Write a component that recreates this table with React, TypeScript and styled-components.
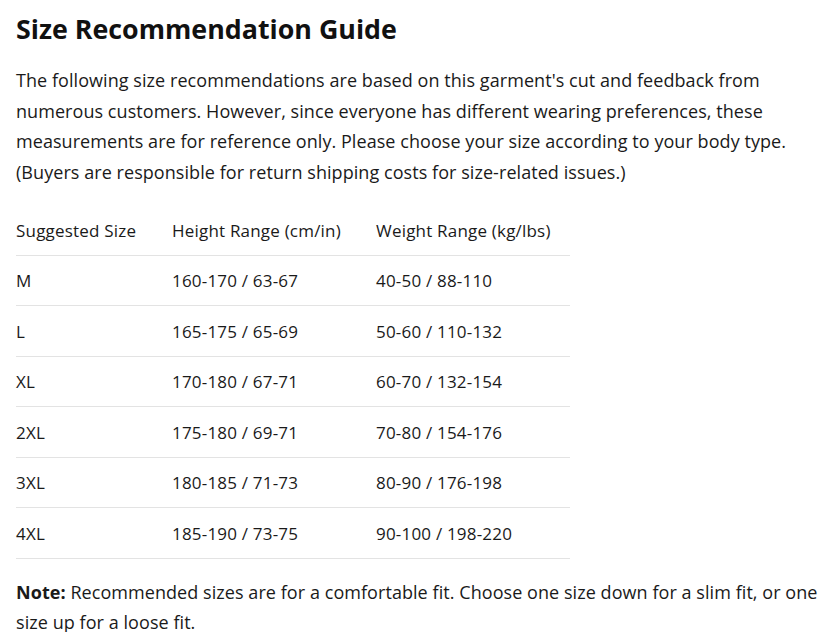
import React from 'react';
import styled, { createGlobalStyle } from 'styled-components';

const GlobalStyle = createGlobalStyle`
  html, body {
    margin: 0;
    padding: 0;
    background: #ffffff;
  }
  body {
    font-family: 'Open Sans', 'Noto Sans', 'Liberation Sans', sans-serif;
    color: #1a1a1a;
  }
`;

const rows = [
  { size: 'M', height: '160-170 / 63-67', weight: '40-50 / 88-110' },
  { size: 'L', height: '165-175 / 65-69', weight: '50-60 / 110-132' },
  { size: 'XL', height: '170-180 / 67-71', weight: '60-70 / 132-154' },
  { size: '2XL', height: '175-180 / 69-71', weight: '70-80 / 154-176' },
  { size: '3XL', height: '180-185 / 71-73', weight: '80-90 / 176-198' },
  { size: '4XL', height: '185-190 / 73-75', weight: '90-100 / 198-220' },
];

export default function App() {
  return (
    <>
      <GlobalStyle />
      <Page>
        <Heading>Size Recommendation Guide</Heading>
        <Intro>
          The following size recommendations are based on this garment's cut and feedback from
          <br />
          numerous customers. However, since everyone has different wearing preferences, these
          <br />
          measurements are for reference only. Please choose your size according to your body type.
          <br />
          (Buyers are responsible for return shipping costs for size-related issues.)
        </Intro>

        <Table>
          <Row>
            <Cell>Suggested Size</Cell>
            <Cell>Height Range (cm/in)</Cell>
            <Cell>Weight Range (kg/lbs)</Cell>
          </Row>
          {rows.map((r) => (
            <Row key={r.size}>
              <Cell>{r.size}</Cell>
              <Cell>{r.height}</Cell>
              <Cell>{r.weight}</Cell>
            </Row>
          ))}
        </Table>

        <Note>
          <strong>Note:</strong> Recommended sizes are for a comfortable fit. Choose one size down
          for a slim fit, or one
          <br />
          size up for a loose fit.
        </Note>
      </Page>
    </>
  );
}

const Page = styled.div`
  width: 836px;
  padding: 10px 0 0 16px;
  box-sizing: border-box;
`;

const Heading = styled.h1`
  margin: 0;
  font-size: 26.8px;
  font-weight: 700;
  line-height: 38px;
  color: #111111;
`;

const Intro = styled.p`
  margin: 17px 0 0;
  font-size: 18px;
  letter-spacing: 0.06px;
  line-height: 30.6px;
  white-space: nowrap;
`;

const Table = styled.div`
  width: 554px;
  margin-top: 18px;
  font-size: 17px;
  letter-spacing: 0.2px;
`;

const Row = styled.div`
  display: grid;
  grid-template-columns: 156px 204px 194px;
  align-items: center;
  height: 50.5px;
  border-bottom: 1px solid #e3e3e3;
  box-sizing: border-box;
`;

const Cell = styled.div`
  white-space: nowrap;
`;

const Note = styled.p`
  margin: 18px 0 0;
  font-size: 18px;
  letter-spacing: 0.06px;
  line-height: 30.6px;
  white-space: nowrap;

  strong {
    font-weight: 700;
  }
`;
